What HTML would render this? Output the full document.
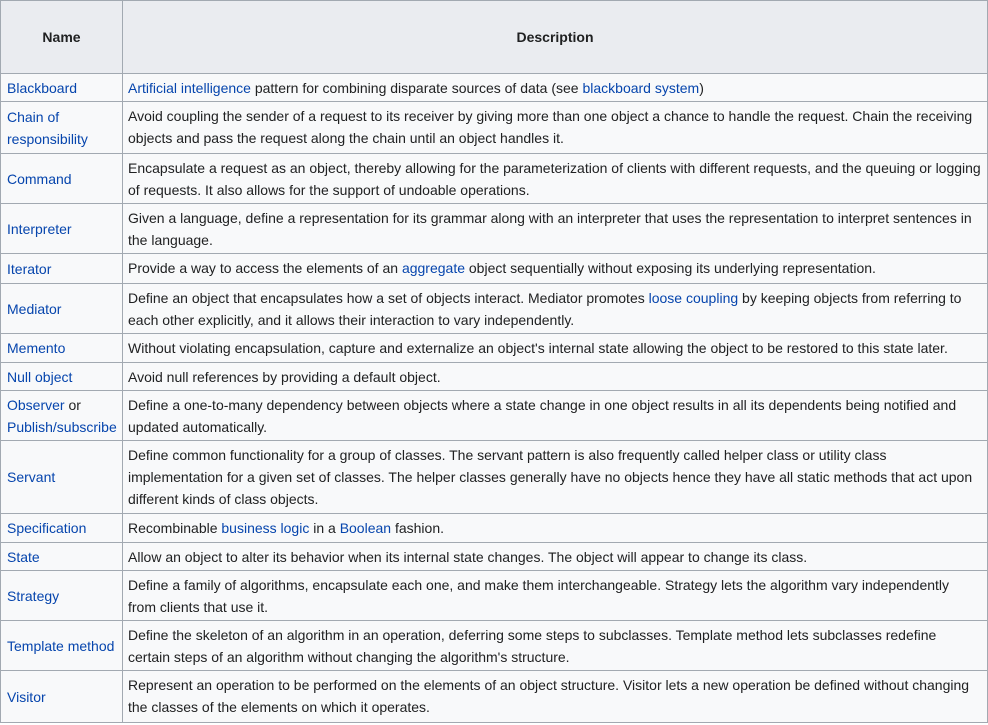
<!DOCTYPE html>
<html><head><meta charset="utf-8"><style>
body{margin:0;background:#fff;font-family:"Liberation Sans",Arial,sans-serif;font-size:14px;color:#202122;}
.t{position:absolute;left:0;top:0;width:986px;height:721px;border:1px solid #a2a9b1;background:#f8f9fa;}
.r{position:absolute;left:0;width:986px;border-top:1px solid #a2a9b1;box-sizing:border-box;}
.n{position:absolute;left:0;top:0;bottom:0;width:122px;border-right:1px solid #a2a9b1;display:flex;align-items:center;padding:0 6px;box-sizing:border-box;line-height:22px;}
.d{position:absolute;left:122px;right:0;top:0;padding:3px 5px;line-height:22px;white-space:nowrap;}
a{color:#0645ad;text-decoration:none;}
.h{background:#eaecf0;font-weight:bold;}
.h .n{justify-content:center;}
.h .d{display:flex;align-items:center;justify-content:center;bottom:0;padding:0;}
</style></head><body>
<div class="t">
<div class="r h" style="top:0;height:72px;border-top:none"><div class="n">Name</div><div class="d">Description</div></div>
<div class="r" style="top:72px;height:28px"><div class="n"><a>Blackboard</a></div><div class="d"><a>Artificial intelligence</a> pattern for combining disparate sources of data (see <a>blackboard system</a>)</div></div>
<div class="r" style="top:100px;height:52px"><div class="n"><a>Chain of<br>responsibility</a></div><div class="d">Avoid coupling the sender of a request to its receiver by giving more than one object a chance to handle the request. Chain the receiving<br>objects and pass the request along the chain until an object handles it.</div></div>
<div class="r" style="top:152px;height:50px"><div class="n"><a>Command</a></div><div class="d">Encapsulate a request as an object, thereby allowing for the parameterization of clients with different requests, and the queuing or logging<br>of requests. It also allows for the support of undoable operations.</div></div>
<div class="r" style="top:202px;height:50px"><div class="n"><a>Interpreter</a></div><div class="d">Given a language, define a representation for its grammar along with an interpreter that uses the representation to interpret sentences in<br>the language.</div></div>
<div class="r" style="top:252px;height:30px"><div class="n"><a>Iterator</a></div><div class="d">Provide a way to access the elements of an <a>aggregate</a> object sequentially without exposing its underlying representation.</div></div>
<div class="r" style="top:282px;height:50px"><div class="n"><a>Mediator</a></div><div class="d">Define an object that encapsulates how a set of objects interact. Mediator promotes <a>loose coupling</a> by keeping objects from referring to<br>each other explicitly, and it allows their interaction to vary independently.</div></div>
<div class="r" style="top:332px;height:29px"><div class="n"><a>Memento</a></div><div class="d">Without violating encapsulation, capture and externalize an object's internal state allowing the object to be restored to this state later.</div></div>
<div class="r" style="top:361px;height:28px"><div class="n"><a>Null object</a></div><div class="d">Avoid null references by providing a default object.</div></div>
<div class="r" style="top:389px;height:50px"><div class="n"><span><a>Observer</a> or<br><a>Publish/subscribe</a></span></div><div class="d">Define a one-to-many dependency between objects where a state change in one object results in all its dependents being notified and<br>updated automatically.</div></div>
<div class="r" style="top:439px;height:73px"><div class="n"><a>Servant</a></div><div class="d">Define common functionality for a group of classes. The servant pattern is also frequently called helper class or utility class<br>implementation for a given set of classes. The helper classes generally have no objects hence they have all static methods that act upon<br>different kinds of class objects.</div></div>
<div class="r" style="top:512px;height:29px"><div class="n"><a>Specification</a></div><div class="d">Recombinable <a>business logic</a> in a <a>Boolean</a> fashion.</div></div>
<div class="r" style="top:541px;height:28px"><div class="n"><a>State</a></div><div class="d">Allow an object to alter its behavior when its internal state changes. The object will appear to change its class.</div></div>
<div class="r" style="top:569px;height:50px"><div class="n"><a>Strategy</a></div><div class="d">Define a family of algorithms, encapsulate each one, and make them interchangeable. Strategy lets the algorithm vary independently<br>from clients that use it.</div></div>
<div class="r" style="top:619px;height:50px"><div class="n"><a>Template method</a></div><div class="d">Define the skeleton of an algorithm in an operation, deferring some steps to subclasses. Template method lets subclasses redefine<br>certain steps of an algorithm without changing the algorithm's structure.</div></div>
<div class="r" style="top:669px;height:52px"><div class="n"><a>Visitor</a></div><div class="d">Represent an operation to be performed on the elements of an object structure. Visitor lets a new operation be defined without changing<br>the classes of the elements on which it operates.</div></div>
</div>
</body></html>
